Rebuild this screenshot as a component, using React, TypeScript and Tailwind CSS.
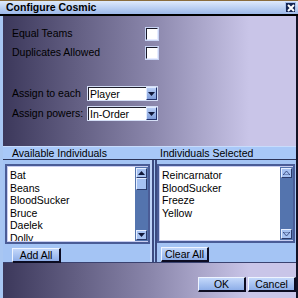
import React from "react";

function Arrow({ dir, muted }: { dir: "up" | "down"; muted?: boolean }) {
  return (
    <svg width="7" height="4" viewBox="0 0 7 4">
      {dir === "up" ? (
        <polygon points="0,4 7,4 3.5,0" fill={muted ? "none" : "#10183a"} stroke={muted ? "#2a3a70" : "none"} strokeWidth="0.8" />
      ) : (
        <polygon points="0,0 7,0 3.5,4" fill={muted ? "none" : "#10183a"} stroke={muted ? "#2a3a70" : "none"} strokeWidth="0.8" />
      )}
    </svg>
  );
}

function Checkbox() {
  return <div className="w-[12px] h-[12px] bg-white border-t border-l border-[#1a1a2a] border-b border-r border-b-[#e8ecff] border-r-[#e8ecff] shadow-[0_0_0_1px_#c8d4f4]" />;
}

function Select({ value }: { value: string }) {
  return (
    <div className="w-[71px] h-[15px] border border-[#d4def6] flex bg-white">
      <div className="flex-1 flex items-center border-t border-l border-[#20202c] pl-[1px] leading-none text-[10.5px]">{value}</div>
      <div className="w-[11px] h-full bg-gradient-to-b from-[#b8cef6] to-[#7f9cd8] border border-[#e0eaff] border-b-[#20306a] border-r-[#20306a] flex items-center justify-center">
        <Arrow dir="down" />
      </div>
    </div>
  );
}

function Btn({ label, w }: { label: string; w: string }) {
  return (
    <div className={`${w} h-[15px] flex items-center justify-center leading-none text-[10.5px] bg-gradient-to-b from-[#c4d8fa] to-[#8eaee8] border-t border-l border-[#eef4ff] border-b-2 border-r-2 border-b-[#0c0c22] border-r-[#0c0c22]`}>
      {label}
    </div>
  );
}

function ListBox({ items, active }: { items: string[]; active?: boolean }) {
  return (
    <div className="h-[80px] border-2 border-[#4a5c96] flex">
      <div className="flex-1 flex border border-[#c8cdf0] border-r-0 bg-white overflow-hidden">
        <div className="flex-1 pl-[2px] pt-[2px] overflow-hidden text-[10.5px]">
          {items.map((t) => (
            <div key={t} className="leading-[12.6px] h-[12.6px] whitespace-nowrap">{t}</div>
          ))}
        </div>
        <div className="w-[13px] bg-[#5474ae] flex flex-col justify-between py-[1px]">
          <div className="h-[10px] mx-[1px] bg-[#a6c2f2] border border-[#e6eeff] border-b-[#2a3a6a] border-r-[#2a3a6a] flex items-center justify-center">
            <Arrow dir="up" muted={!active} />
          </div>
          {active && (
            <div className="h-[12px] mx-[1px] bg-[#a6c2f2] border border-[#e6eeff] border-b-[#2a3a6a] border-r-[#2a3a6a] mb-auto" />
          )}
          <div className="h-[10px] mx-[1px] bg-[#a6c2f2] border border-[#e6eeff] border-b-[#2a3a6a] border-r-[#2a3a6a] flex items-center justify-center">
            <Arrow dir="down" muted={!active} />
          </div>
        </div>
      </div>
    </div>
  );
}

export default function App() {
  const left = ["Bat", "Beans", "BloodSucker", "Bruce", "Daelek", "Dolly"];
  const right = ["Reincarnator", "BloodSucker", "Freeze", "Yellow"];
  return (
    <div className="w-[298px] h-[298px] flex flex-col font-['Liberation_Sans',Arial,sans-serif] text-[10.5px] text-black overflow-hidden bg-[#c9c5e8]">
      <div className="h-[14px] flex items-center border-t border-[#8a6c3c] bg-gradient-to-b from-[#dfeafc] to-[#9cb8e8] pl-[6px] pr-[2px]">
        <span className="font-bold flex-1 leading-none text-[10.5px]">Configure Cosmic</span>
        <div className="w-[11px] h-[11px] bg-[#142552] border border-[#a8c0ec] flex items-center justify-center">
          <svg width="8" height="8" viewBox="0 0 8 8">
            <path d="M1 1L7 7M7 1L1 7" stroke="#fff" strokeWidth="2" />
          </svg>
        </div>
      </div>
      <div className="h-[2px] bg-black" />
      <div className="flex-1 flex flex-col border-l-[3px] border-l-[#a8c6f2] border-r-2 border-r-[#121226] bg-[linear-gradient(to_right,#3c385b,#8985aa_50%,#c9c5e8_84%)]">
        <div className="h-[130px] pl-[9px] pt-[11px] flex flex-col">
          <div className="flex items-center h-[13px]">
            <div className="w-[134px]">Equal Teams</div>
            <Checkbox />
          </div>
          <div className="flex items-center h-[13px] mt-[6px]">
            <div className="w-[134px]">Duplicates Allowed</div>
            <Checkbox />
          </div>
          <div className="flex items-center h-[15px] mt-[27px]">
            <div className="w-[75px]">Assign to each</div>
            <Select value="Player" />
          </div>
          <div className="flex items-center h-[15px] mt-[5px]">
            <div className="w-[75px]">Assign powers:</div>
            <Select value="In-Order" />
          </div>
        </div>
        <div className="h-[14px] flex items-center bg-[#a8c8f8] border-t border-[#c8dcfc] border-b border-b-[#2c3458] leading-none">
          <div className="w-[153px] pl-[9px]">Available Individuals</div>
          <div className="pl-[4px]">Individuals Selected</div>
        </div>
        <div className="h-[103px] flex bg-[#a4c4f4] border-b border-[#3a4270]">
          <div className="w-[147px] flex flex-col pl-[2px] pt-[4px]">
            <ListBox items={left} active />
            <div className="mt-[4px] pl-[7px]">
              <Btn label="Add All" w="w-[49px]" />
            </div>
          </div>
          <div className="w-[7px] flex">
            <div className="w-[2px] bg-[#c0d4f8]" />
            <div className="w-[2px] bg-[#3c4a80]" />
            <div className="w-[1px] bg-[#a4c4f4]" />
            <div className="w-[2px] bg-[#3c4a80]" />
          </div>
          <div className="flex-1 flex flex-col pt-[4px] pr-[1px]">
            <ListBox items={right} />
            <div className="mt-[4px] pl-[4px]">
              <Btn label="Clear All" w="w-[48px]" />
            </div>
          </div>
        </div>
        <div className="flex-1 flex justify-end items-start pt-[14px] gap-[2px]">
          <Btn label="OK" w="w-[48px]" />
          <Btn label="Cancel" w="w-[48px]" />
        </div>
      </div>
    </div>
  );
}
